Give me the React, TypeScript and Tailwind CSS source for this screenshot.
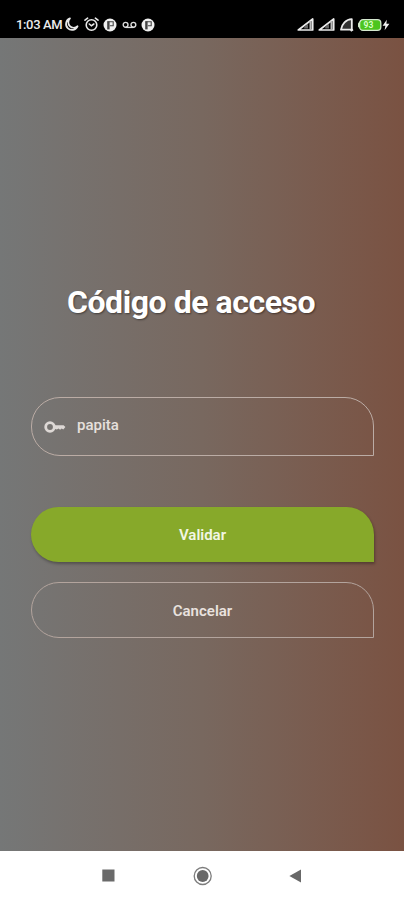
import { useState } from "react";

const MoonIcon = () => (
  <svg width="15" height="15" viewBox="0 0 15 15" fill="none" stroke="#e8e8e8" strokeWidth="1.7" strokeLinejoin="round">
    <path d="M6 1.3A6 6 0 1 0 13.6 9.2A5.4 5.4 0 0 1 6 1.3Z" />
  </svg>
);

const AlarmIcon = () => (
  <svg width="15" height="15" viewBox="0 0 15 15" fill="none" stroke="#e8e8e8" strokeWidth="1.6" strokeLinecap="round">
    <circle cx="7.5" cy="8" r="5.3" />
    <path d="M1 3.2L3.6 1.2M14 3.2L11.4 1.2M5.3 7L7.4 8.8L9.8 7" />
  </svg>
);

const ParkingIcon = () => (
  <svg width="14" height="14" viewBox="0 0 14 14">
    <circle cx="7" cy="7" r="6.5" fill="#f0f0f0" />
    <path d="M4.2 3.4H6.6V11.4H4.2Z" fill="#444" />
    <path d="M4.4 3.8H10.2V7.8H6.8" fill="none" stroke="#444" strokeWidth="1.1" />
  </svg>
);

const VoicemailIcon = () => (
  <svg width="15" height="8" viewBox="0 0 15 8" fill="none" stroke="#dcdcdc" strokeWidth="1.4">
    <circle cx="3.6" cy="3.8" r="2.4" />
    <circle cx="11.4" cy="3.8" r="2.4" />
    <path d="M3.6 6.4H11.4" />
  </svg>
);

const SignalIcon = () => (
  <svg width="17" height="13" viewBox="0 0 17 13">
    <path d="M1.3 12L15.7 1V12Z" fill="none" stroke="#ececec" strokeWidth="1.7" strokeLinejoin="round" />
    <path d="M7.2 10.4V8.8L11 5.8V10.4Z" fill="#666" />
    <path d="M13.6 3V11" stroke="#bbb" strokeWidth="2.2" />
  </svg>
);

const NetworkIcon = () => (
  <svg width="14" height="14" viewBox="0 0 14 14" strokeLinejoin="round">
    <path d="M1 11.7C1.8 6 6 1.3 11.8 1.2V11.7Z" fill="#333" stroke="#ececec" strokeWidth="1.8" />
    <path d="M10.6 13L13 11.5" stroke="#ececec" strokeWidth="2" />
  </svg>
);

const BatteryIcon = () => (
  <svg width="24" height="12" viewBox="0 0 24 12">
    <rect x="0" y="3.4" width="2.4" height="5.2" rx="1" fill="#cfe8c4" />
    <rect x="1.6" y="0.7" width="21.2" height="10.6" rx="3.4" fill="#4cc51e" stroke="#d5e8cf" strokeWidth="1.3" />
    <text x="10.5" y="9" textAnchor="middle" fontFamily="Roboto, sans-serif" fontSize="8.5" fontWeight="700" fill="#d9ffc8">93</text>
  </svg>
);

const BoltIcon = () => (
  <svg width="8" height="12" viewBox="0 0 8 12">
    <path d="M4.8 0.8L0.6 6.8H3.4L2.6 11.2L7.4 4.8H4.4Z" fill="#f2f2f2" />
  </svg>
);

const KeyIcon = () => (
  <svg width="22" height="12" viewBox="0 0 22 12">
    <circle cx="6" cy="6" r="4.3" fill="none" stroke="#ddd8d5" strokeWidth="2.8" />
    <path d="M10.5 4.2H19.6L21.4 6L19.3 8.5L17.7 7.4L16.1 8.7L14.5 7.4L12.9 8.5L10.5 7.7Z" fill="#ddd8d5" />
  </svg>
);

function StatusBar() {
  return (
    <header className="flex h-[38px] items-center justify-between bg-black pt-[11px] pr-[13px] pl-4 text-[#ececec]">
      <div className="flex items-center">
        <span className="w-[48px] text-[13px] leading-4 font-medium tracking-[-0.35px] whitespace-nowrap">1:03 AM</span>
        <div className="flex items-center gap-[4.6px]">
          <MoonIcon />
          <AlarmIcon />
          <ParkingIcon />
          <VoicemailIcon />
          <ParkingIcon />
        </div>
      </div>
      <div className="mr-px flex items-center">
        <SignalIcon />
        <span className="w-1" />
        <SignalIcon />
        <span className="w-[5px]" />
        <NetworkIcon />
        <span className="w-1" />
        <BatteryIcon />
        <BoltIcon />
      </div>
    </header>
  );
}

function NavBar() {
  return (
    <nav className="flex h-[49px] items-center bg-white pl-[102px]">
      <button type="button" aria-label="Recientes">
        <svg width="13" height="13" viewBox="0 0 13 13"><rect x="0.3" y="0.5" width="12.2" height="12" fill="#6a6a6a" /></svg>
      </button>
      <button type="button" aria-label="Inicio" className="ml-[78px]">
        <svg width="20" height="20" viewBox="0 0 20 20">
          <circle cx="9.7" cy="10" r="8.5" fill="none" stroke="#7c7c7c" strokeWidth="1.3" />
          <circle cx="9.7" cy="10" r="5.9" fill="#686868" />
        </svg>
      </button>
      <button type="button" aria-label="Atrás" className="ml-[76px]">
        <svg width="13" height="14" viewBox="0 0 13 14"><path d="M0.4 7L12 0.4V13.6Z" fill="#686868" /></svg>
      </button>
    </nav>
  );
}

export default function App() {
  const [code, setCode] = useState("papita");

  return (
    <div className="flex h-[900px] w-[404px] flex-col overflow-hidden font-[Roboto,sans-serif]">
      <StatusBar />
      <main className="flex-1 bg-linear-to-r from-[#757777] via-[#78685f] to-[#7a5242] pr-[30px] pl-[31px]">
        <h1 className="mt-[244px] ml-9 text-[32px] leading-10 font-bold tracking-[-0.45px] whitespace-nowrap text-white [text-shadow:1px_1px_2px_rgba(0,0,0,0.45)]">
          Código de acceso
        </h1>
        <form onSubmit={(e) => e.preventDefault()}>
          <label className="mt-[75px] flex h-[59px] items-center rounded-[29px] rounded-br-none border border-[#bbaca5] pl-3">
            <KeyIcon />
            <input
              type="text"
              value={code}
              onChange={(e) => setCode(e.target.value)}
              className="ml-[11px] w-60 pb-[2px] text-[15px] font-medium text-[#e6e0dd] outline-none"
            />
          </label>
          <button
            type="submit"
            className="mt-[51px] block h-[55px] w-full rounded-[28px] rounded-br-none bg-[#87a92a] pt-[2px] text-[15px] font-semibold text-[#f2f6e4] shadow-[1px_2px_3px_rgba(0,0,0,0.3)]"
          >
            Validar
          </button>
          <button
            type="button"
            className="mt-5 block h-[56px] w-full rounded-[28px] rounded-br-none border border-[#b3a49d] pt-[2px] text-[15px] font-semibold text-[#e9e2df]"
          >
            Cancelar
          </button>
        </form>
      </main>
      <NavBar />
    </div>
  );
}
